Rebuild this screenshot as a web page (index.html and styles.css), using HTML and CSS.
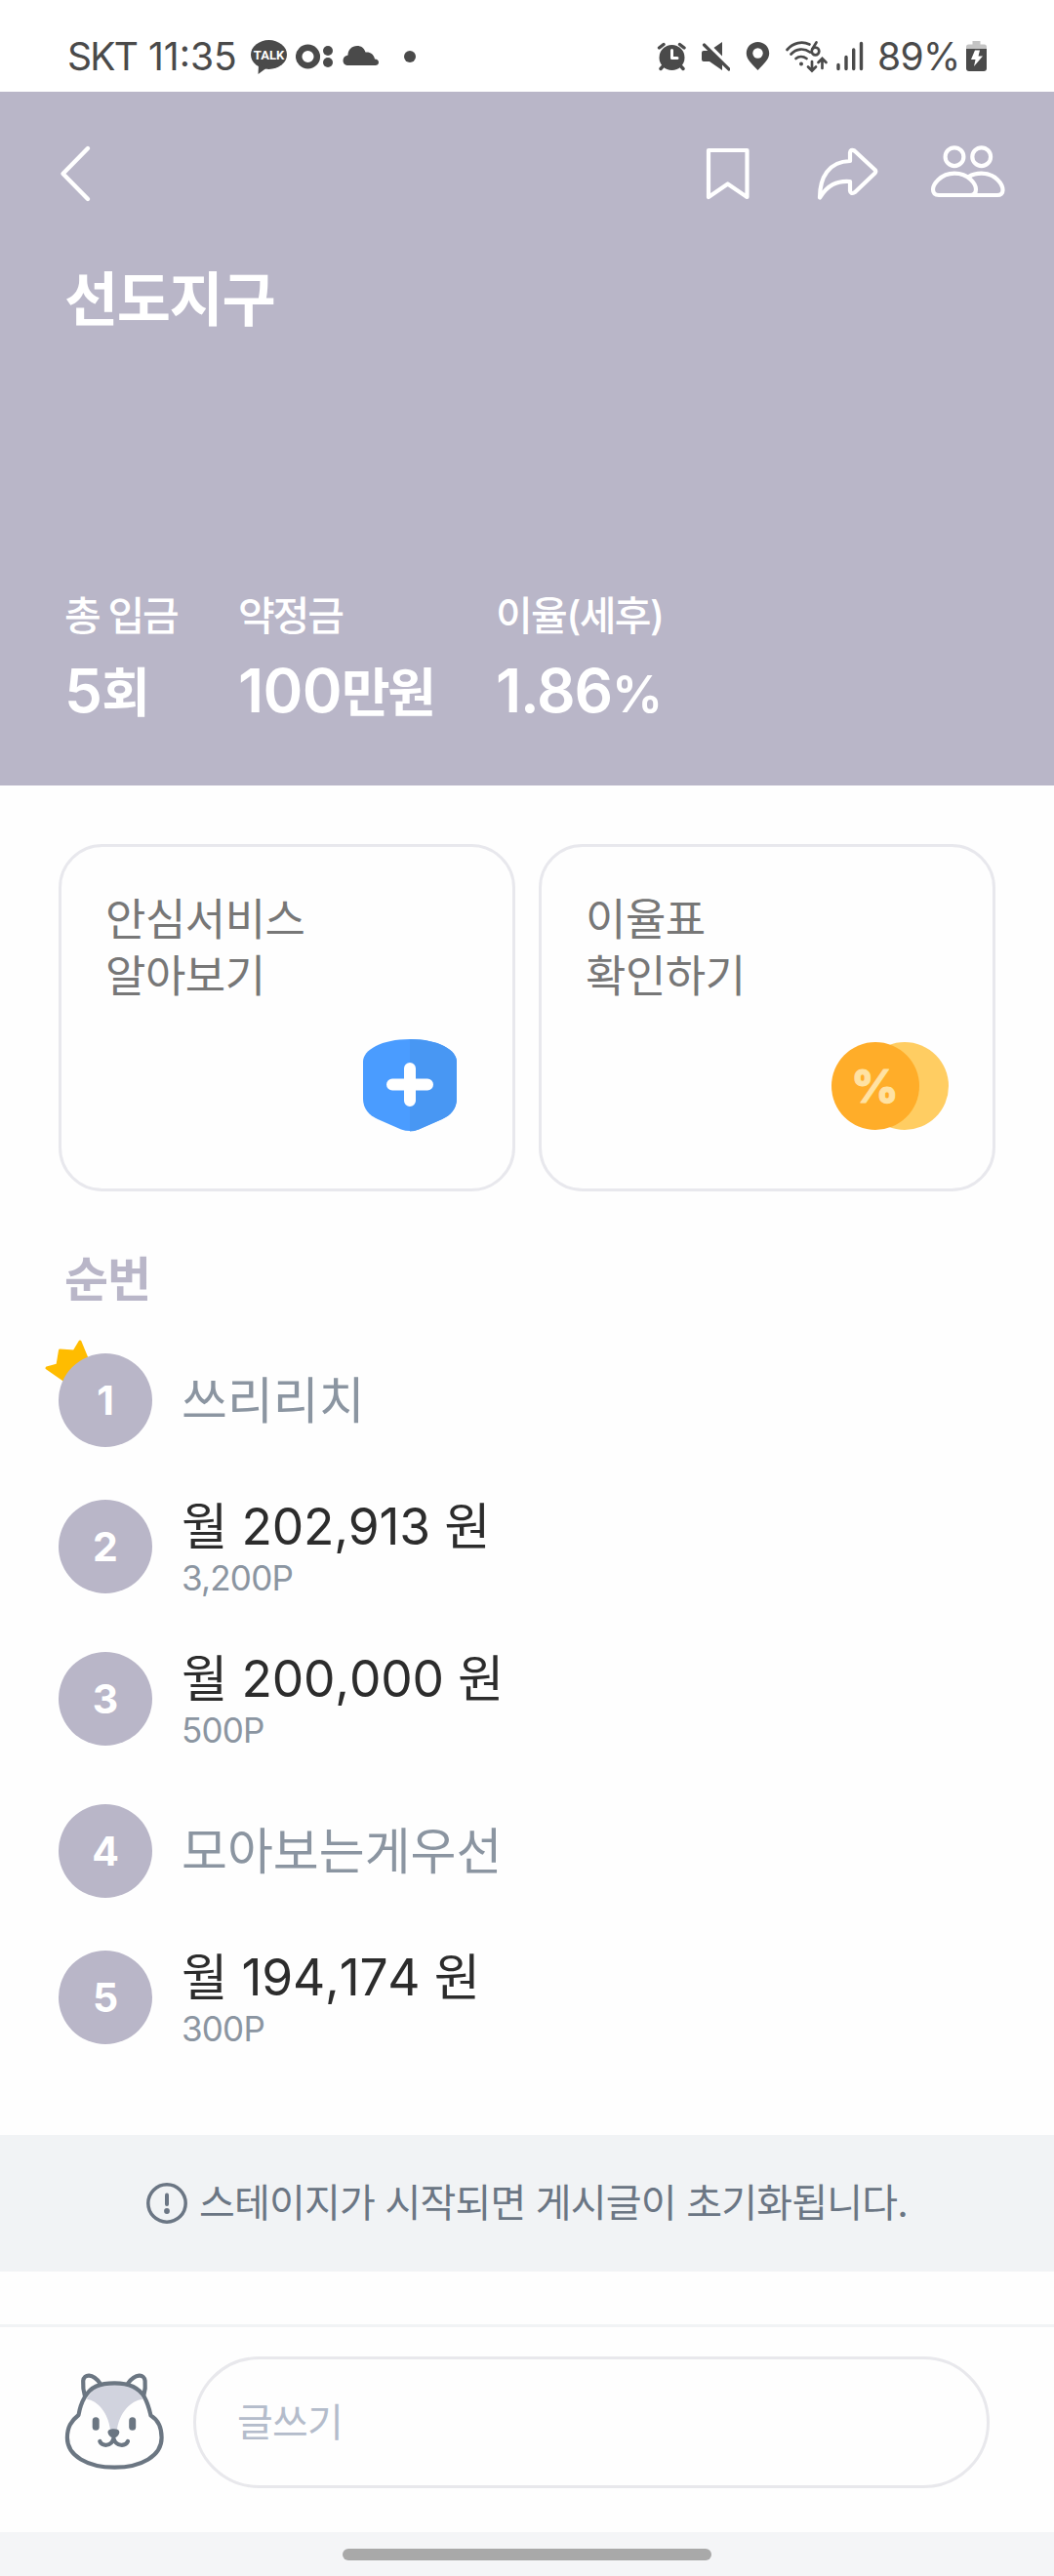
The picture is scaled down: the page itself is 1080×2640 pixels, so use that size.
FILE: index.html
```html
<!DOCTYPE html>
<html lang="ko">
<head>
    <meta charset="UTF-8">
    <meta name="viewport" content="width=device-width, initial-scale=1.0">
    <title>선도지구</title>
    <link rel="stylesheet" href="styles.css">
</head>
<body>
    <div class="status-bar">
        <span class="carrier">SKT</span>
        <span class="time">11:35</span>
        <svg class="icon-talk" width="39" height="40" viewBox="0 0 39 40">
            <ellipse cx="19.500" cy="19" rx="18.500" ry="15" fill="#4a4a4a"/>
            <path d="M9 29L8.500 39L18 32Z" fill="#4a4a4a"/>
            <text x="19.500" y="24" text-anchor="middle" class="talk-text">TALK</text>
        </svg>
        <svg class="icon-dots" width="38" height="40" viewBox="0 0 38 40">
            <circle cx="12.500" cy="21" r="9.300" fill="none" stroke="#4a4a4a" stroke-width="6.500"/>
            <circle cx="33" cy="15" r="5" fill="#4a4a4a"/>
            <circle cx="33" cy="27" r="5" fill="#4a4a4a"/>
        </svg>
        <svg class="icon-cloud" width="38" height="40" viewBox="0 0 38 40">
            <path d="M6 30C2.500 30 .5 28 .5 25C.5 22 2.500 20 5.500 19.500C5.500 14 9.500 10 15 10C19 10 22 12 23.500 16.500C28 16 32 18 33 23.500C35.500 23.500 37 25 37 27C37 29 35.500 30 33.500 30Z" fill="#4a4a4a"/>
        </svg>
        <svg class="icon-more" width="12" height="40" viewBox="0 0 12 40">
            <circle cx="6" cy="21" r="6" fill="#4a4a4a"/>
        </svg>

        <div class="status-right">
            <svg width="30" height="40" viewBox="0 0 30 40">
                <circle cx="15.500" cy="22" r="13" fill="#4a4a4a"/>
                <path d="M2.500 12L7 8.500M28 12L23.500 8.500M4 33.500L8 29M27 33.500L23 29" stroke="#4a4a4a" stroke-width="3.400" stroke-linecap="round"/>
                <path d="M15.500 14.500V22.500H21" fill="none" stroke="#fff" stroke-width="3" stroke-linecap="round" stroke-linejoin="round"/>
            </svg>
            <svg class="icon-mute" width="30" height="40" viewBox="0 0 30 40">
                <path d="M3 15H9L22 6V35L9 26H3Q1 26 1 24V17Q1 15 3 15Z" fill="#4a4a4a"/>
                <path d="M3 5L31 33" stroke="#fff" stroke-width="5"/>
                <path d="M3.500 9L29 34" stroke="#4a4a4a" stroke-width="3.200" stroke-linecap="round"/>
            </svg>
            <svg class="icon-pin" width="25" height="40" viewBox="0 0 25 40">
                <path d="M12.500 6C6 6 .8 11 .8 17.500C.8 24 6 28 12.500 35C19 28 24.200 24 24.200 17.500C24.200 11 19 6 12.500 6Z" fill="#4a4a4a"/>
                <circle cx="12.500" cy="17.500" r="5.200" fill="#fff"/>
            </svg>
            <svg class="icon-wifi" width="46" height="40" viewBox="0 0 46 40">
                <g fill="none" stroke="#4a4a4a" stroke-width="2.700" stroke-linecap="round">
                    <path d="M2.500 14C9 6.500 18 5 25.500 8.500M6.500 18.500C12 12.500 20 12 26 16.500M11.500 23C14.500 20.500 19 20.500 22.500 23"/>
                    <circle cx="31.500" cy="15.500" r="3.800"/>
                    <path d="M28.500 13L32.500 6.500"/>
                    <path d="M28 26V35M24 31.500L28 35.500L32 31.500M38.500 33V23.500M34.500 27L38.500 23L42.500 27"/>
                </g>
                <circle cx="17" cy="28.500" r="2" fill="#4a4a4a"/>
            </svg>
            <svg class="icon-signal" width="29" height="40" viewBox="0 0 29 40">
                <path d="M3 29.500V33.500M11 21.500V33.500M18.700 14V33.500M26.500 7.500V33.500" stroke="#4a4a4a" stroke-width="3.400" stroke-linecap="round"/>
            </svg>
            <span class="percent">89%</span>
            <svg width="21" height="40" viewBox="0 0 21 40">
                <path d="M6.500 5H14.500V8.500H18.500Q21 8.500 21 11V13H0V11Q0 8.500 2.500 8.500H6.500Z" fill="#c4c4c4"/>
                <path d="M0 13H21V33Q21 36 18 36H3Q0 36 0 33Z" fill="#4a4a4a"/>
                <path d="M9 14.500H14L12.500 20.500H17L8 31L9.500 24H5Z" fill="#fff"/>
            </svg>
        </div>
    </div>

    <header class="header">
        <div class="toolbar">
            <svg width="36" height="66" viewBox="0 0 36 66">
                <path d="M30 8L4.500 34L30 60" fill="none" stroke="#fff" stroke-width="4.400" stroke-linecap="round" stroke-linejoin="round"/>
            </svg>
            <div class="actions">
                <svg width="47" height="66" viewBox="0 0 47 66">
                    <path d="M4 10H43.500V58L23.700 44.500L4 58Z"/>
                </svg>
                <svg class="icon-share" width="64" height="66" viewBox="0 0 64 66">
                    <path d="M3 58.500C3 38 12 21.500 34 21V12.500Q34.500 8.500 38.500 10.500L59.500 30Q61 31.700 59.500 33.500L39 53Q34.500 55.500 34 51.500V42C20 41 11 46 3 58.500Z"/>
                </svg>
                <svg class="icon-people" width="78" height="66" viewBox="0 0 78 66">
                    <circle cx="25" cy="16.700" r="9.400"/>
                    <circle cx="52.700" cy="16.700" r="9.400"/>
                    <path d="M3 50C3 46 10 33.700 25 33.700C40 33.700 47 45 47 50C47 54 45 56 41 56H9C5 56 3 54 3 50Z"/>
                    <path d="M39.700 37C43 35 48 33.700 52.700 33.700C67 33.700 74.500 45 74.500 51C74.500 54 72.500 56 69 56H42"/>
                </svg>
            </div>
        </div>
        <h1>선도지구</h1>
        <div class="stats">
            <div class="stat">
                <p class="stat-label">총 입금</p>
                <p class="stat-value">5<span>회</span></p>
            </div>
            <div class="stat">
                <p class="stat-label">약정금</p>
                <p class="stat-value">100<span>만원</span></p>
            </div>
            <div class="stat">
                <p class="stat-label">이율(세후)</p>
                <p class="stat-value">1.86<span>%</span></p>
            </div>
        </div>
    </header>

    <main>
        <div class="cards">
            <div class="card">
                <p>안심서비스<br>알아보기</p>
                <svg width="120" height="120" viewBox="0 0 120 120">
                    <path d="M60 12C31 12 12 23 12 35V73C12 83 18 90 27 94L51 104.500Q60 107.500 69 104.500L93 94C102 90 108 83 108 73V35C108 23 89 12 60 12Z" fill="#4a9cff"/>
                    <path d="M60 12V106.500Q65 106.500 69 104.500L93 94C102 90 108 83 108 73V35C108 23 89 12 60 12Z" fill="#4897f3"/>
                    <path d="M60 42V75M42 58.500H78" stroke="#fff" stroke-width="12" stroke-linecap="round"/>
                </svg>
            </div>
            <div class="card">
                <p>이율표<br>확인하기</p>
                <svg width="120" height="120" viewBox="0 0 120 120">
                    <circle cx="75" cy="60" r="45" fill="#ffcd62"/>
                    <circle cx="45" cy="60" r="45" fill="#ffad29"/>
                    <text x="44.500" y="77" text-anchor="middle" class="coin-text">%</text>
                </svg>
            </div>
        </div>

        <h2>순번</h2>
        <ul class="order-list">
            <li class="order">
                <div class="order-no">
                    <svg class="crown" width="50" height="50" viewBox="0 0 50 50">
                        <path d="M3 30L14 27L16.500 12L31 13L37 3L44 20L26 46Z" fill="#ffbc00" stroke="#ffbc00" stroke-width="3" stroke-linejoin="round"/>
                    </svg>
                    <span>1</span>
                </div>
                <p class="order-name">쓰리리치</p>
            </li>
            <li class="order">
                <div class="order-no"><span>2</span></div>
                <div class="order-info">
                    <p class="amount">월 202,913 원</p>
                    <p class="point">3,200P</p>
                </div>
            </li>
            <li class="order">
                <div class="order-no"><span>3</span></div>
                <div class="order-info">
                    <p class="amount">월 200,000 원</p>
                    <p class="point">500P</p>
                </div>
            </li>
            <li class="order">
                <div class="order-no"><span>4</span></div>
                <p class="order-name">모아보는게우선</p>
            </li>
            <li class="order">
                <div class="order-no"><span>5</span></div>
                <div class="order-info">
                    <p class="amount">월 194,174 원</p>
                    <p class="point">300P</p>
                </div>
            </li>
        </ul>
    </main>

    <div class="notice">
        <svg width="42" height="42" viewBox="0 0 42 42">
            <circle cx="21" cy="21" r="19.200" fill="none" stroke="#6b7684" stroke-width="3.500"/>
            <path d="M21 12.500V22" stroke="#6b7684" stroke-width="4" stroke-linecap="round"/>
            <circle cx="21" cy="29" r="2.900" fill="#6b7684"/>
        </svg>
        <p>스테이지가 시작되면 게시글이 초기화됩니다.</p>
    </div>

    <div class="compose">
        <svg class="avatar" width="114" height="112" viewBox="0 0 114 112">
            <path d="M28.800 32.700C40 34 51 47 53 64H60C62 47 74 34 86.300 32.700C80 20 70 17 57.400 17C44 17 36 20 28.800 32.700Z" fill="#d1d3de"/>
            <g fill="none" stroke="#6b7682" stroke-width="4.200" stroke-linecap="round" stroke-linejoin="round">
                <path d="M57.400 16.300C42 16.300 33 20 26.800 30.700C22.500 38 21.500 43 20.500 49C13 55 8.900 61 8.900 72.300C8.900 91 30 102.700 57.400 102.700C85 102.700 105.600 91 105.600 72.300C105.600 61 102 54 94.500 49.500C93 43 92 38 88 30.700C82 20 72 16.300 57.400 16.300Z"/>
                <path d="M26.800 29C25 23 25 18 25.200 14C26 7 35 6 42.600 16.700M71 16.700C79 6 88 7 88.600 14C89 18 89 23 87.400 28.500"/>
                <path d="M42.300 76C44 81 54 82 56.400 73C59 82 69 81 71 76"/>
            </g>
            <rect x="34.700" y="51.300" width="7" height="13.400" rx="3.500" fill="#6b7682"/>
            <rect x="72.200" y="51.300" width="7" height="13.400" rx="3.500" fill="#6b7682"/>
            <path d="M56.400 63.300C60 63.300 62.300 64.500 62.300 66.500C62.300 69.500 59 72.500 56.400 72.500C54 72.500 50.500 69.500 50.500 66.500C50.500 64.500 53 63.300 56.400 63.300Z" fill="#6b7682"/>
        </svg>
        <input type="text" placeholder="글쓰기">
    </div>

    <div class="nav-bar">
        <div class="nav-handle"></div>
    </div>
</body>
</html>
```
FILE: styles.css
```css
* {
    margin: 0;
    padding: 0;
    box-sizing: border-box;
}

body {
    width: 1080px;
    height: 2640px;
    font-family: Inter, 'Noto Sans CJK KR', sans-serif;
    background: #fefefe;
    overflow: hidden;
}

svg {
    display: block;
    flex-shrink: 0;
}

/* status bar */
.status-bar {
    display: flex;
    height: 94px;
    padding: 37px 69px 0 69px;
    background: #fff;
    color: #4a4a4a;
    font-size: 39px;
    line-height: 41px;
}

.carrier {
    width: 83px;
    letter-spacing: -1.8px;
}

.time {
    width: 104px;
}

.talk-text {
    font-family: Roboto, sans-serif;
    font-size: 13px;
    font-weight: bold;
    fill: #fff;
}

.icon-dots {
    margin-left: 8px;
}

.icon-cloud {
    margin-left: 10px;
}

.icon-more {
    margin-left: 25px;
}

.status-right {
    display: flex;
    margin-left: auto;
}

.icon-mute,
.icon-wifi {
    margin-left: 15px;
}

.icon-pin {
    margin-left: 16px;
}

.icon-signal {
    margin-left: 6px;
}

.percent {
    width: 91px;
    margin-left: 14px;
    letter-spacing: -0.7px;
}

/* header */
.header {
    display: flex;
    flex-direction: column;
    height: 711px;
    padding: 50px 49px 61px 60px;
    background: #b9b6c8;
    color: #fff;
}

.toolbar,
.actions {
    display: flex;
}

.toolbar {
    justify-content: space-between;
}

.actions svg {
    fill: none;
    stroke: #fff;
    stroke-width: 4.2;
    stroke-linecap: round;
    stroke-linejoin: round;
}

.icon-share {
    margin-left: 68px;
}

.icon-people {
    margin-left: 52px;
}

.header h1 {
    margin: 61px 0 0 6px;
    font-size: 60px;
    font-weight: 600;
    line-height: 72px;
    letter-spacing: -1.4px;
}

.stats {
    display: grid;
    grid-template-columns: 178px 264px auto;
    margin: auto 0 0 6px;
}

.stat-label {
    margin-bottom: 17px;
    font-size: 41px;
    font-weight: 500;
    line-height: 48px;
    letter-spacing: -2.1px;
}

.stat-value {
    height: 72px;
    font-size: 62px;
    font-weight: 600;
    line-height: 72px;
    letter-spacing: -0.7px;
}

.stat-value span {
    font-size: 54px;
    letter-spacing: -2.4px;
}

.stat:last-child .stat-label {
    letter-spacing: -1.6px;
}

.stat:last-child .stat-value {
    letter-spacing: -1.2px;
}

.stat:last-child .stat-value span {
    font-size: 52px;
}

/* cards */
main {
    padding: 60px 60px 0;
}

.cards {
    display: grid;
    grid-template-columns: 1fr 1fr;
    gap: 24px;
}

.card {
    display: flex;
    flex-direction: column;
    justify-content: space-between;
    height: 356px;
    padding: 46px 45px 45px;
    border: 3px solid #e8e8ed;
    border-radius: 45px;
    color: #777;
    font-size: 45px;
    line-height: 58px;
    letter-spacing: -0.5px;
}

.card svg {
    align-self: flex-end;
}

.coin-text {
    font-size: 47px;
    font-weight: 800;
    letter-spacing: 0;
    fill: #ffe2a3;
    stroke: #ffe2a3;
    stroke-width: 1;
    stroke-linejoin: round;
}

/* order list */
main h2 {
    margin: 61px 0 45px 6px;
    color: #b9b6c8;
    font-size: 49px;
    font-weight: 600;
    line-height: 60px;
    letter-spacing: -1.2px;
}

.order-list {
    display: flex;
    flex-direction: column;
    gap: 54px;
    list-style: none;
}

.order {
    display: flex;
    gap: 30px;
}

.order-no {
    position: relative;
    width: 96px;
    height: 96px;
}

.order-no span {
    position: relative;
    display: block;
    border-radius: 50%;
    background: #b9b6c8;
    color: #fff;
    font-size: 41px;
    font-weight: 700;
    line-height: 96px;
    text-align: center;
}

.crown {
    position: absolute;
    top: -15px;
    left: -15px;
}

.order-name {
    height: 96px;
    color: #8b95a1;
    font-size: 51px;
    line-height: 97px;
}

.order-info {
    height: 102px;
}

.amount {
    color: #2c2c2c;
    font-size: 51.5px;
    line-height: 54px;
    letter-spacing: -0.2px;
    font-kerning: none;
}

.point {
    color: #8b95a1;
    font-size: 35px;
    line-height: 52px;
    letter-spacing: -0.8px;
}

/* notice */
.notice {
    display: flex;
    align-items: center;
    justify-content: center;
    gap: 12px;
    height: 140px;
    margin-top: 87px;
    background: #f1f3f5;
    color: #6b7684;
    font-size: 40px;
    line-height: 48px;
    letter-spacing: -0.8px;
}

/* compose */
.compose {
    display: flex;
    height: 213px;
    margin-top: 54px;
    padding: 30px 66px 0 60px;
    border-top: 3px solid #f1f3f5;
}

.avatar {
    margin-top: 11px;
}

.compose input {
    flex: 1;
    height: 135px;
    margin-left: 24px;
    padding: 0 42px;
    border: 3px solid #e8e8ec;
    border-radius: 68px;
    background: none;
    font-family: inherit;
    font-size: 40px;
    letter-spacing: -0.8px;
    outline: none;
}

.compose input::placeholder {
    color: #b4bccb;
}

/* gesture bar */
.nav-bar {
    display: flex;
    justify-content: center;
    height: 45px;
    padding-top: 17px;
    background: #f4f5f7;
}

.nav-handle {
    width: 378px;
    height: 12px;
    border-radius: 6px;
    background: #a9a9a9;
}
```
